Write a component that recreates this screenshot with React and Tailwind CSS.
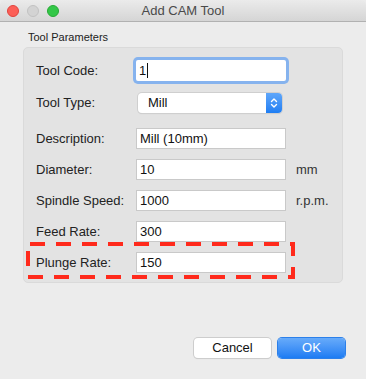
const FIELDS = [
  { label: 'Description:', value: 'Mill (10mm)', mt: 'mt-[15px]' },
  { label: 'Diameter:', value: '10', unit: 'mm', mt: 'mt-[10px]' },
  { label: 'Spindle Speed:', value: '1000', unit: 'r.p.m.', mt: 'mt-[10px]' },
  { label: 'Feed Rate:', value: '300', mt: 'mt-[10px]' },
  { label: 'Plunge Rate:', value: '150', mt: 'mt-[10px]' },
];

function TrafficLights() {
  return (
    <div className="absolute left-[7px] top-[5px] flex gap-[8px]">
      <span className="w-[12px] h-[12px] rounded-full bg-[#fc5f57] border border-[#e0443e]" />
      <span className="w-[12px] h-[12px] rounded-full bg-[#d3d3d3] border border-[#c2c2c2]" />
      <span className="w-[12px] h-[12px] rounded-full bg-[#33c748] border border-[#27aa35]" />
    </div>
  );
}

function Row({ label, children, unit, mt }) {
  return (
    <div className={`flex items-center h-[21px] ${mt}`}>
      <span className="w-[100px] shrink-0 text-[13px] text-[#222]">{label}</span>
      {children}
      {unit && <span className="ml-[10px] text-[13px] text-[#333]">{unit}</span>}
    </div>
  );
}

export default function App() {
  return (
    <div className="relative w-[366px] h-[379px] bg-[#ececec] overflow-hidden font-['Liberation_Sans',Arial,sans-serif]">
      {/* Title bar */}
      <div className="relative h-[22px] bg-gradient-to-b from-[#ebebeb] to-[#d5d5d5] border-b border-[#b1b1b1] flex items-center justify-center rounded-t-[5px]">
        <TrafficLights />
        <span className="text-[13px] text-[#4a4a4a]">Add CAM Tool</span>
      </div>

      <div className="px-[23px]">
        <div className="mt-[8px] ml-[5px] text-[11px] text-[#222] leading-[14px]">Tool Parameters</div>

        {/* Group box */}
        <div className="mt-[3px] h-[236px] rounded-[5px] bg-[#e3e3e3] border border-[#dadada] pl-[12px] pt-[12px]">
          <Row label="Tool Code:" mt="mt-0">
            <div className="w-[150px] h-[21px] bg-white rounded-[2px] shadow-[0_0_0_3px_#86b3ee] flex items-center pl-[3px] text-[13px] text-[#111]">
              1<span className="ml-[1px] w-[1px] h-[15px] bg-[#111]" />
            </div>
          </Row>

          <Row label="Tool Type:" mt="mt-[11px]">
            <div className="ml-[2px] w-[144px] h-[20px] flex rounded-[4px] bg-white shadow-[0_0_0_1px_#cfcfcf,0_1px_1px_rgba(0,0,0,0.12)]">
              <span className="flex-1 pl-[10px] text-[13px] text-[#111] leading-[20px]">Mill</span>
              <span className="w-[16px] h-[20px] rounded-r-[4px] bg-gradient-to-b from-[#5ea6fa] to-[#1e7ef3] flex items-center justify-center">
                <svg width="8" height="12" viewBox="0 0 8 12" fill="none" stroke="white" strokeWidth="1.4" strokeLinecap="round" strokeLinejoin="round">
                  <path d="M1.5 4.5 L4 2 L6.5 4.5" />
                  <path d="M1.5 7.5 L4 10 L6.5 7.5" />
                </svg>
              </span>
            </div>
          </Row>

          {FIELDS.map((f) => (
            <Row key={f.label} label={f.label} unit={f.unit} mt={f.mt}>
              <div className="w-[150px] h-[21px] bg-white border border-[#c9c9c9] flex items-center pl-[3px] text-[13px] text-[#111]">
                {f.value}
              </div>
            </Row>
          ))}
        </div>

        {/* Buttons */}
        <div className="mt-[55px] flex justify-end gap-[7px] mr-[-2px]">
          <button className="w-[77px] h-[20px] rounded-[4px] bg-white shadow-[0_0_0_1px_#cdcdcd,0_1px_1px_rgba(0,0,0,0.15)] text-[13px] text-[#111]">
            Cancel
          </button>
          <button className="w-[67px] h-[20px] rounded-[4px] bg-gradient-to-b from-[#67abfa] to-[#1b7cf3] shadow-[0_0_0_1px_#2c80ea] text-[13px] text-white">
            OK
          </button>
        </div>
      </div>

      {/* Annotation: dashed highlight over Plunge Rate */}
      <svg className="absolute left-[26px] top-[242px]" width="269" height="37" viewBox="0 0 269 37">
        <rect x="2" y="2" width="265" height="33" fill="none" stroke="#ff2a1c" strokeWidth="4" strokeDasharray="15 11" strokeDashoffset="-2" />
      </svg>
    </div>
  );
}
